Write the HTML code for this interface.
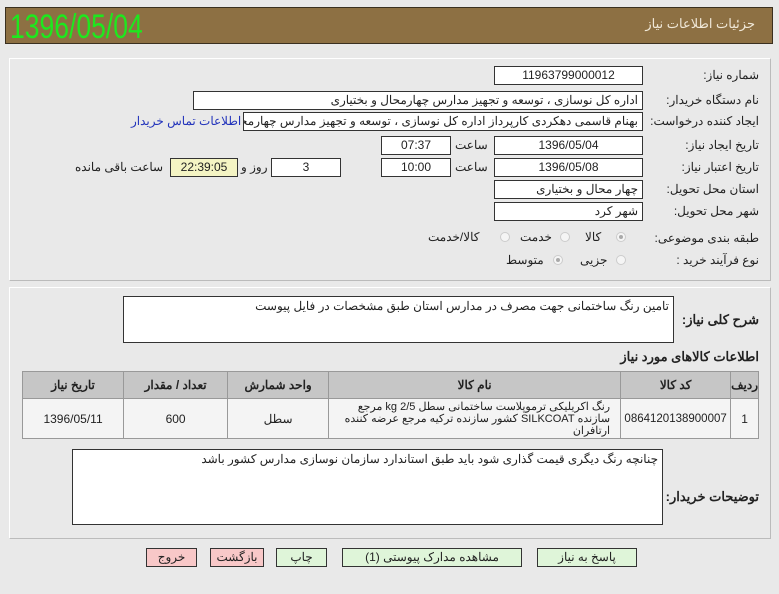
<!DOCTYPE html>
<html><head><meta charset="utf-8"><style>
*{box-sizing:border-box;margin:0;padding:0}
body{width:779px;height:594px;background:#e9e9e9;font-family:Tahoma,"Liberation Sans","Noto Sans CJK SC",sans-serif;font-size:12px;color:#222;position:relative;overflow:hidden;direction:rtl}
.a{position:absolute;white-space:nowrap}
.hdr{left:5px;top:7px;width:768px;height:37px;background:#8d7043;border:1px solid #3a3020}
.panel{border:1px solid #bbb;border-top-color:#fff;border-left-color:#fff;background:#e9e9e9}
.box{position:absolute;background:#fff;border:1px solid #333;height:19px;line-height:17px;padding:0 4px;font-size:12px;white-space:nowrap;overflow:hidden}
.c{text-align:center}
.lbl{position:absolute;right:20px;white-space:nowrap;font-size:12px}
.rd{position:absolute;width:10px;height:10px;border-radius:50%;border:1px solid #ccc;background:#f5f5f5}
.rd.on::after{content:"";position:absolute;left:2px;top:2px;width:4px;height:4px;border-radius:50%;background:#aaa}
table{position:absolute;border-collapse:collapse;font-size:12px}
td,th{border:1px solid #999;text-align:center}
th{background:#c6c6c6;font-weight:bold;height:27px}
td{background:#f4f4f4;height:40px}
.btn{position:absolute;top:548px;height:19px;border:1px solid #333;text-align:center;line-height:17px;font-size:12px}
.g{background:#dff5d9}.p{background:#f8c8c8}
</style></head><body>
<div class="a hdr"></div>
<div class="a" style="left:10px;top:7px;font-size:34px;color:#1ee81e;font-family:'Liberation Sans',sans-serif;direction:ltr;line-height:40px;transform:scaleX(0.78);transform-origin:left center">1396/05/04</div>
<div class="a" style="right:24px;top:16px;color:#f0e8d8;font-size:13px">جزئیات اطلاعات نیاز</div>

<div class="a panel" style="left:9px;top:58px;width:762px;height:223px"></div>
<div class="lbl" style="top:68px">شماره نیاز:</div>
<div class="box c" style="left:494px;top:66px;width:149px">11963799000012</div>
<div class="lbl" style="top:93px">نام دستگاه خریدار:</div>
<div class="box" style="left:193px;top:91px;width:450px">اداره کل نوسازی ، توسعه و تجهیز مدارس چهارمحال و بختیاری</div>
<div class="lbl" style="top:114px">ایجاد کننده درخواست:</div>
<div class="box" style="left:243px;top:112px;width:400px">بهنام قاسمی دهکردی کارپرداز اداره کل نوسازی ، توسعه و تجهیز مدارس چهارمحال</div>
<div class="a" style="left:131px;top:114px;color:#2233bb">اطلاعات تماس خریدار</div>

<div class="lbl" style="top:138px">تاریخ ایجاد نیاز:</div>
<div class="box c" style="left:494px;top:136px;width:149px">1396/05/04</div>
<div class="a" style="left:455px;top:138px">ساعت</div>
<div class="box c" style="left:381px;top:136px;width:70px">07:37</div>

<div class="lbl" style="top:160px">تاریخ اعتبار نیاز:</div>
<div class="box c" style="left:494px;top:158px;width:149px">1396/05/08</div>
<div class="a" style="left:455px;top:160px">ساعت</div>
<div class="box c" style="left:381px;top:158px;width:70px">10:00</div>
<div class="box c" style="left:271px;top:158px;width:70px">3</div>
<div class="a" style="left:241px;top:160px">روز و</div>
<div class="box c" style="left:170px;top:158px;width:68px;background:#f4f4c4">22:39:05</div>
<div class="a" style="left:75px;top:160px">ساعت باقی مانده</div>

<div class="lbl" style="top:182px">استان محل تحویل:</div>
<div class="box" style="left:494px;top:180px;width:149px">چهار محال و بختیاری</div>
<div class="lbl" style="top:204px">شهر محل تحویل:</div>
<div class="box" style="left:494px;top:202px;width:149px">شهر کرد</div>

<div class="lbl" style="top:231px">طبقه بندی موضوعی:</div>
<div class="rd on" style="left:616px;top:232px"></div><div class="a" style="left:585px;top:230px">کالا</div>
<div class="rd" style="left:560px;top:232px"></div><div class="a" style="left:520px;top:230px">خدمت</div>
<div class="rd" style="left:500px;top:232px"></div><div class="a" style="left:428px;top:230px">کالا/خدمت</div>
<div class="lbl" style="top:253px">نوع فرآیند خرید :</div>
<div class="rd" style="left:616px;top:255px"></div><div class="a" style="left:580px;top:253px">جزیی</div>
<div class="rd on" style="left:553px;top:255px"></div><div class="a" style="left:506px;top:253px">متوسط</div>

<div class="a panel" style="left:9px;top:287px;width:762px;height:252px"></div>
<div class="a" style="right:20px;top:312px;font-weight:bold;font-size:13px">شرح کلی نیاز:</div>
<div class="box" style="left:123px;top:296px;width:551px;height:47px;line-height:16px;padding-top:1px">تامین رنگ ساختمانی جهت مصرف در مدارس استان طبق مشخصات در فایل پیوست</div>
<div class="a" style="right:20px;top:349px;font-weight:bold;font-size:13px">اطلاعات کالاهای مورد نیاز</div>
<table style="left:22px;top:371px;width:737px">
<tr><th style="width:25px">ردیف</th><th style="width:110px">کد کالا</th><th style="width:292px">نام کالا</th><th style="width:101px">واحد شمارش</th><th style="width:104px">تعداد / مقدار</th><th>تاریخ نیاز</th></tr>
<tr><td>1</td><td style="font-size:11.5px">0864120138900007</td><td style="font-size:11px;line-height:12px;padding:0 10px;text-align:right">رنگ اکریلیکی ترموپلاست ساختمانی سطل 2/5 kg مرجع سازنده SILKCOAT کشور سازنده ترکیه مرجع عرضه کننده ارتافران</td><td>سطل</td><td>600</td><td>1396/05/11</td></tr>
</table>
<div class="a" style="right:20px;top:489px;font-weight:bold;font-size:13px">توضیحات خریدار:</div>
<div class="box" style="left:72px;top:449px;width:591px;height:76px;line-height:16px;padding-top:1px">چنانچه رنگ دیگری قیمت گذاری شود باید طبق استاندارد سازمان نوسازی مدارس کشور باشد</div>

<div class="btn g" style="left:537px;width:100px">پاسخ به نیاز</div>
<div class="btn g" style="left:342px;width:180px">مشاهده مدارک پیوستی (1)</div>
<div class="btn g" style="left:276px;width:51px">چاپ</div>
<div class="btn p" style="left:210px;width:54px">بازگشت</div>
<div class="btn p" style="left:146px;width:51px">خروج</div>
</body></html>
